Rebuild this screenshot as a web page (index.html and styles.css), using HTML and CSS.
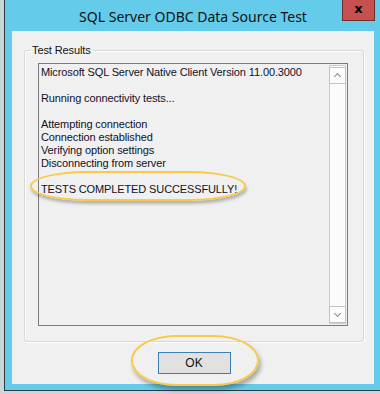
FILE: index.html
```html
<html>
    <head>
        <meta name="viewport" content="width=device-width, initial-scale=1.0">
        <title>SQL Server ODBC Data Source Test</title>
        <link rel="stylesheet" href="styles.css">
    </head>
    <body>
        <div class="window">
            <div class="titlebar">
                <span class="title">SQL Server ODBC Data Source Test</span>
                <div class="close">x</div>
            </div>
            <div class="dialog">
                <fieldset class="group">
                    <legend>Test Results</legend>
                    <div class="results">
                        <div class="lines">
                            <div>Microsoft SQL Server Native Client Version 11.00.3000</div>
                            <div>&nbsp;</div>
                            <div>Running connectivity tests...</div>
                            <div>&nbsp;</div>
                            <div>Attempting connection</div>
                            <div>Connection established</div>
                            <div>Verifying option settings</div>
                            <div>Disconnecting from server</div>
                            <div>&nbsp;</div>
                            <div><span class="mark">TESTS COMPLETED SUCCESSFULLY!</span></div>
                        </div>
                        <div class="scrollbar">
                            <div class="arrow up"></div>
                            <div class="track"></div>
                            <div class="arrow down"></div>
                        </div>
                    </div>
                </fieldset>
                <div class="buttons">
                    <span class="okwrap"><button id="ok">OK</button></span>
                </div>
            </div>
        </div>
    </body>
</html>
```

FILE: styles.css
```css
html, body{
    margin: 0px;
    padding: 0px;
    height: 100%;
    width: 100%;
    overflow: hidden;
}
body{
    background-color: #c9d7dd;
    font-family: 'Liberation Sans', Arial, sans-serif;
    font-size: 11px;
    color: black;
}
.window{
    margin-left: 4px;
    height: 391px;
    box-sizing: border-box;
    border-left: 1px solid #2e3a40;
    border-bottom: 1px solid #2e3a40;
    background-color: #65cbea;
    padding: 0px 6px 6px 7px;
    display: flex;
    flex-direction: column;
}
.titlebar{
    position: relative;
    height: 31px;
    display: flex;
    align-items: center;
    justify-content: center;
    flex-shrink: 0;
}
.title{
    font-family: 'Noto Sans', sans-serif;
    font-size: 14px;
    color: #111;
    margin-top: 1px;
}
.close{
    position: absolute;
    right: -1px;
    top: 0px;
    width: 31px;
    height: 20px;
    background-color: #c75050;
    border: 1px solid #6e2f2b;
    border-top: none;
    color: black;
    font-family: 'DejaVu Sans', sans-serif;
    font-weight: bold;
    font-size: 13px;
    line-height: 17px;
    text-align: center;
}
.dialog{
    flex: 1;
    background-color: #f0f0f0;
    display: flex;
    flex-direction: column;
    padding: 13px 10px 0px 12px;
}
.group{
    margin: 0px;
    padding: 7px 15px 14px 13px;
    border: 1px solid #d7d7d7;
    border-radius: 3px;
    box-shadow: 1px 1px 0px #ffffff, inset 1px 1px 0px #ffffff;
    height: 298px;
    box-sizing: border-box;
}
.group legend{
    padding: 0px 2px;
    margin-left: -8px;
    color: #111;
    letter-spacing: -0.1px;
}
.results{
    display: flex;
    height: 263px;
    border: 1px solid #7a7a7a;
    background-color: #f0f0f0;
    padding: 1px 1px 1px 2px;
    box-sizing: border-box;
}
.lines{
    flex: 1;
    line-height: 13px;
    padding-top: 1px;
    color: #101028;
    letter-spacing: -0.12px;
}
.mark{
    position: relative;
}
.mark::after{
    content: '';
    position: absolute;
    left: -11px;
    right: -9px;
    top: -12px;
    bottom: -6px;
    border: 2px solid #f9c94a;
    border-radius: 60px / 16px;
    box-shadow: 1px 3px 3px rgba(0,0,0,0.25);
}
.scrollbar{
    width: 17px;
    display: flex;
    flex-direction: column;
    background-color: #fbfbfb;
    border: 1px solid #cdcdcd;
    box-sizing: border-box;
}
.arrow{
    height: 17px;
    border: 1px solid #c3c3c3;
    margin: 0px -1px;
    box-sizing: border-box;
    position: relative;
    background-color: #fcfcfc;
}
.arrow::after{
    content: '';
    position: absolute;
    left: 5px;
    width: 4px;
    height: 4px;
    border-left: 1px solid #8a8a8a;
    border-top: 1px solid #8a8a8a;
}
.up{
    margin-top: 1px;
}
.up::after{
    top: 6px;
    transform: rotate(45deg);
}
.down::after{
    top: 4px;
    transform: rotate(225deg);
}
.track{
    flex: 1;
}
.buttons{
    display: flex;
    justify-content: center;
    padding-top: 10px;
}
.okwrap{
    position: relative;
    display: inline-block;
}
.okwrap::before{
    content: '';
    position: absolute;
    left: -27px;
    right: -28px;
    top: -17px;
    bottom: -12px;
    border: 2px solid #f9c94a;
    border-radius: 45px / 25px;
    box-shadow: 2px 4px 4px rgba(0,0,0,0.3);
}
button{
    display: block;
    width: 73px;
    height: 22px;
    background-color: #e1e1e1;
    border: 1px solid #3c7fb1;
    border-radius: 0px;
    font-family: 'Liberation Sans', Arial, sans-serif;
    font-size: 12px;
    color: #111;
    padding: 0px;
    outline: none;
}
```
